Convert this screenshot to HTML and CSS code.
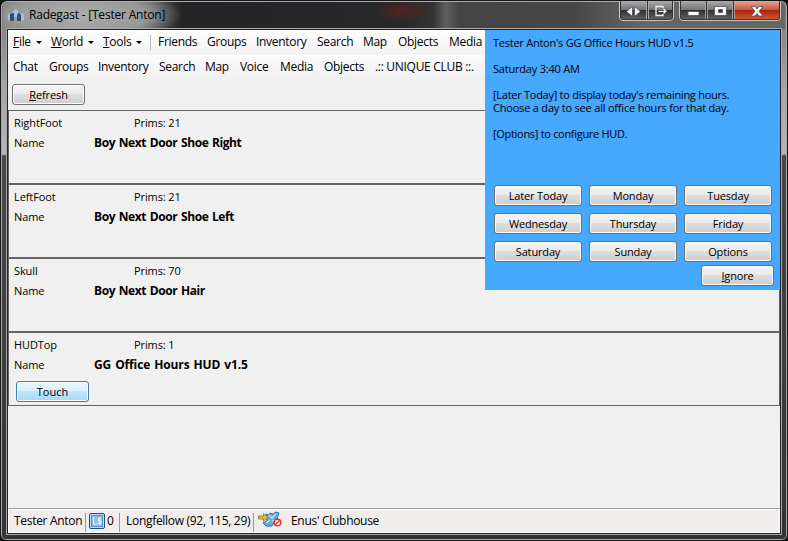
FILE: index.html
```html
<!DOCTYPE html>
<html lang="en">
<head>
<meta charset="utf-8">
<title>Radegast - [Tester Anton]</title>
<link rel="stylesheet" href="styles.css">
</head>
<body>
<div class="window">
  <header class="titlebar">
    <svg class="app-icon" width="16" height="16" viewBox="0 0 16 16">
      <path d="M5 3l3-2 2 2v6H5z" fill="#8fc6ff"/>
      <path d="M0 6l2-1v8l-2-1z" fill="#8fc6ff"/><path d="M2 6l4-1v8H2z" fill="#484848"/>
      <path d="M6 9h4v3H6z" fill="#6aa9e8"/>
      <path d="M10 5l3 1v7H9V8z" fill="#484848"/><path d="M12 5l4 1v6l-3 1V7z" fill="#8fc6ff"/>
    </svg>
    <span class="caption">Radegast - [Tester Anton]</span>
    <svg class="controls" width="166" height="21" viewBox="0 0 166 21">
      <defs>
        <linearGradient id="glass" x2="0" y2="1"><stop offset="0" stop-color="#aaa"/><stop offset=".46" stop-color="#747474"/><stop offset=".48" stop-color="#303030"/><stop offset="1" stop-color="#696969"/></linearGradient>
        <linearGradient id="red" x2="0" y2="1"><stop offset="0" stop-color="#e2a596"/><stop offset=".46" stop-color="#c75a42"/><stop offset=".48" stop-color="#a92207"/><stop offset="1" stop-color="#d95d38"/></linearGradient>
      </defs>
      <path d="M1.500 0V16q0 3.500 3.500 3.500H52q3.500 0 3.500-3.500V0" fill="url(#glass)" stroke="#c4c4c4"/>
      <path d="M2.500 0V15.500q0 3 3 3H51.500q3 0 3-3V0M29.500 0V18" fill="none" stroke="#343434"/>
      <path d="M30.500 1V18M28.500 1V18" stroke="#aaa"/>
      <path d="M61.500 0V16q0 3.500 3.500 3.500H159q3.500 0 3.500-3.500V0" fill="url(#glass)" stroke="#c4c4c4"/>
      <path d="M115 0H162V16q0 3-3 3H115z" fill="url(#red)"/>
      <path d="M62.500 0V15.500q0 3 3 3H158.500q3 0 3-3V0M88.500 0V18M115.500 0V18" fill="none" stroke="#343434"/>
      <path d="M87.500 1V18M89.500 1V18M114.500 1V18M116.500 1V18" stroke="#b0b0b0" opacity=".8"/>
      <g fill="#f8f8f8" stroke="#50505a" stroke-width=".8">
        <path d="M14.500 5.500v10l-6-5zM16.500 5.500v10l6-5z"/>
        <path d="M70 10.500h11v4H70z"/>
        <path fill-rule="evenodd" d="M96.500 5.500h12v9h-12zM100.500 8.500v3h4v-3z"/>
        <path d="M133 5.500h4l2 2.500 2-2.500h4l-4 4.800 4 4.700h-4l-2-2.500-2 2.500h-4l4-4.700z"/>
      </g>
      <path d="M45 7V5.500h-7v9h7V13M40.500 10.300h7M45.500 8l2.500 2.300-2.500 2.300" fill="none" stroke="#ededed" stroke-width="1.300"/>
    </svg>
  </header>

  <main class="client">
    <nav class="menu main-menu">
      <span class="m-file drop"><u>F</u>ile</span><span class="m-world drop"><u>W</u>orld</span><span class="m-tools drop"><u>T</u>ools</span><span class="m-friends">Friends</span><span class="m-groups">Groups</span><span class="m-inv">Inventory</span><span class="m-search">Search</span><span class="m-map">Map</span><span class="m-objects">Objects</span><span class="m-media">Media</span>
    </nav>
    <nav class="menu tabs">
      <span class="t-chat">Chat</span><span class="t-groups">Groups</span><span class="t-inv">Inventory</span><span class="t-search">Search</span><span class="t-map">Map</span><span class="t-voice">Voice</span><span class="t-media">Media</span><span class="t-objects">Objects</span><span class="t-club">.:: UNIQUE CLUB ::.</span>
    </nav>
    <div class="tools"><button class="btn refresh"><u>R</u>efresh</button></div>

    <section class="list">
      <article class="item"><span>RightFoot</span><span class="prims">Prims: 21</span><span>Name</span><b>Boy Next Door Shoe Right</b></article>
      <article class="item"><span>LeftFoot</span><span class="prims">Prims: 21</span><span>Name</span><b>Boy Next Door Shoe Left</b></article>
      <article class="item"><span>Skull</span><span class="prims">Prims: 70</span><span>Name</span><b>Boy Next Door Hair</b></article>
      <article class="item"><span>HUDTop</span><span class="prims">Prims: 1</span><span>Name</span><b class="wide">GG Office Hours HUD v1.5</b><button class="btn touch">Touch</button></article>
    </section>

    <footer class="status">
      <span class="s-user">Tester Anton</span>
      <span class="s-money"><svg width="16" height="16" viewBox="0 0 16 16"><rect x=".5" y=".5" width="15" height="15" rx="1.500" fill="#c0dcf1" stroke="#15528b"/><rect x="2.500" y="2.500" width="11" height="11" fill="#91bee2" stroke="#5c91bc"/><path d="M4.500 4v7h3M12 5.500H9.500V8H12v2.500H8.500M10.700 4v8" fill="none" stroke="#edf7ff"/></svg>0</span>
      <span class="s-place">Longfellow (92, 115, 29)</span>
      <svg class="s-icon" width="24" height="16" viewBox="0 0 24 16"><path d="M8 3l3 1 1-2 3 1 3-2 3 1-2 5 2 3-2 3-3-1-2 3H8l-3-3 4-2z" fill="#67aed0" stroke="#28769d"/><path d="M11 4l3 3 4-4M12 9l-4 3M14 9l3 2" fill="none" stroke="#b9e2f3" stroke-width="1.500"/><path d="M.5 5h5V2.500l4.500 4-4.500 4V8h-5z" fill="#e5b64b" stroke="#98752f" stroke-width=".8"/><circle cx="19.500" cy="11.500" r="3.300" fill="#fff" stroke="#dc2f31" stroke-width="1.400"/><path d="M17.500 13.500l4-4" stroke="#dc2f31" stroke-width="1.300"/></svg>
      <span class="s-parcel">Enus' Clubhouse</span>
    </footer>
  </main>

  <aside class="hud">
    <p class="h1">Tester Anton's GG Office Hours HUD v1.5</p>
    <p class="h2">Saturday 3:40 AM</p>
    <p class="h3"><span class="tight">[Later Today] to display today's remaining hours.</span><br>Choose a day to see all office hours for that day.</p>
    <p class="h4">[Options] to configure HUD.</p>
    <div class="days">
      <button class="btn">Later Today</button><button class="btn">Monday</button><button class="btn">Tuesday</button>
      <button class="btn">Wednesday</button><button class="btn">Thursday</button><button class="btn">Friday</button>
      <button class="btn">Saturday</button><button class="btn">Sunday</button><button class="btn">Options</button>
    </div>
    <button class="btn ignore"><u>I</u>gnore</button>
  </aside>
</div>
</body>
</html>
```
FILE: styles.css
```css
* { box-sizing: border-box; }
body { margin: 0; background: #111; overflow: hidden; }
u { text-decoration: underline; text-decoration-thickness: 1px; text-underline-offset: 1px; }
.window {
  position: relative; width: 788px; height: 541px; padding: 1px 7px 6px;
  border: 1px solid #17171a; border-radius: 7px 7px 6px 6px;
  box-shadow: inset 0 0 0 1px #aaa;
  background: linear-gradient(#777 0, #a6a6a6 90px, #b5b5b5 153px, #48484a 155px, #333 100%);
  font: 12px/16px "Open Sans", sans-serif; color: #000;
}
.titlebar {
  display: flex; height: 27px; margin: 0 -5px;
  background: radial-gradient(ellipse 102px 30px at 76px 13px, #adadad 0, #999 65%, transparent 100%),
    radial-gradient(ellipse 28px 10px at 400px 9px, #56231f 0, transparent 100%),
    linear-gradient(90deg, #777 0, #8c8c8c 100px, #242426 180px, #29292b 400px, #333 430px, #606060 443px, #444 456px, #464646 570px, #666 640px, #666 100%);
  border-radius: 5px 5px 0 0;
}
.app-icon { margin: 6px 0 0 5px; }
.caption { margin: 5px 0 0 5px; width: 560px; letter-spacing: -.2px; white-space: nowrap; }
.controls { margin: -1px 1px 0 auto; flex: none; }
.client { display: flex; flex-direction: column; height: 505px; background: #f0f0f0; border: 1px solid #222; margin: 0 -1px; box-shadow: 0 0 0 1px #aaa; }
.menu { display: flex; height: 25px; flex: none; padding: 4px 0 0 5px; background: linear-gradient(#fdfdfd, #f3f3f3); letter-spacing: -.3px; white-space: nowrap; }
.menu span { flex: none; }
.drop { display: flex; }
.drop::after { content: ""; border: 3px solid transparent; border-top-color: #000; border-bottom: 0; margin: 7px 0 0 5px; }
.m-file { width: 38px; } .m-world { width: 52px; } .m-tools { width: 55px; position: relative; }
.m-tools::before { content: ""; position: absolute; left: 47px; top: 1px; height: 15px; border-left: 1px solid #bdbdbd; }
.m-friends { width: 49px; } .m-groups { width: 49px; } .m-inv { width: 61px; } .m-search { width: 46px; } .m-map { width: 35px; } .m-objects { width: 51px; }
.tabs { background: linear-gradient(#fbfbfb, #f0f0f0); }
.t-chat { width: 36px; } .t-groups { width: 49px; } .t-inv { width: 61px; } .t-search { width: 46px; } .t-map { width: 35px; } .t-voice { width: 40px; } .t-media { width: 44px; } .t-objects { width: 51px; }
.tools { height: 30px; flex: none; padding: 4px 0 0 4px; }
.btn {
  display: block; height: 21px; padding: 0; border: 1px solid #707070; border-radius: 3px;
  background: linear-gradient(#f3f3f3 0, #ebebeb 48%, #dddddd 50%, #cfcfcf 100%);
  box-shadow: inset 0 0 0 1px #fafafa; font: 11px/19px "Open Sans", sans-serif; letter-spacing: -.15px; color: #000; white-space: nowrap;
}
.refresh { width: 73px; letter-spacing: -.1px; }
.list { font-size: 11px; line-height: 15px; flex: 1; letter-spacing: -.1px; }
.item {
  display: grid; grid-template-columns: 80px 40px 1fr; grid-template-rows: 20px 20px; align-items: center;
  height: 74px; padding: 1px 5px; border: 1px solid #646464;
}
.item .prims { grid-column: 3; }
.item b { grid-column: 2 / 4; font-size: 12px; letter-spacing: -.42px; word-spacing: 1px; }
.item b.wide { letter-spacing: -.12px; }
.touch { width: 73px; margin: 4px 0 0 2px; letter-spacing: 0; border-color: #3c7fb1; background: linear-gradient(#e9f6fd 0, #d9f0fc 48%, #bee6fd 50%, #a7d9f5 100%); }
.status { display: flex; height: 25px; flex: none; padding: 4px 0 0 5px; border: 1px solid #fff; border-top: 1px solid #999; background: #f1edec; box-shadow: inset 0 1px #fff; white-space: nowrap; letter-spacing: -.3px; }
.s-user { width: 71px; }
.s-money { display: flex; gap: 2px; width: 34px; padding-left: 3px; border-left: 1px solid #999; letter-spacing: 0; }
.s-money svg { flex: none; }
.s-place { width: 135px; padding-left: 6px; border-left: 1px solid #999; border-right: 1px solid #999; }
.s-icon { margin: -2px 9px 0 4px; flex: none; }
.hud { position: absolute; left: 484px; top: 29px; width: 295px; height: 260px; background: #46a8ff; padding: 6px 8px 0; font-size: 11px; line-height: 13px; letter-spacing: -.2px; white-space: nowrap; }
.hud p { margin: 0 0 13px; }
.hud .h1 { letter-spacing: -.25px; }
.hud .h4 { margin-bottom: 45px; letter-spacing: -.3px; }
.tight { letter-spacing: -.27px; }
.days { display: grid; grid-template-columns: repeat(3, 88px); gap: 7px; margin-left: 1px; }
.ignore { width: 73px; margin: 3px 0 0 208px; }
```
